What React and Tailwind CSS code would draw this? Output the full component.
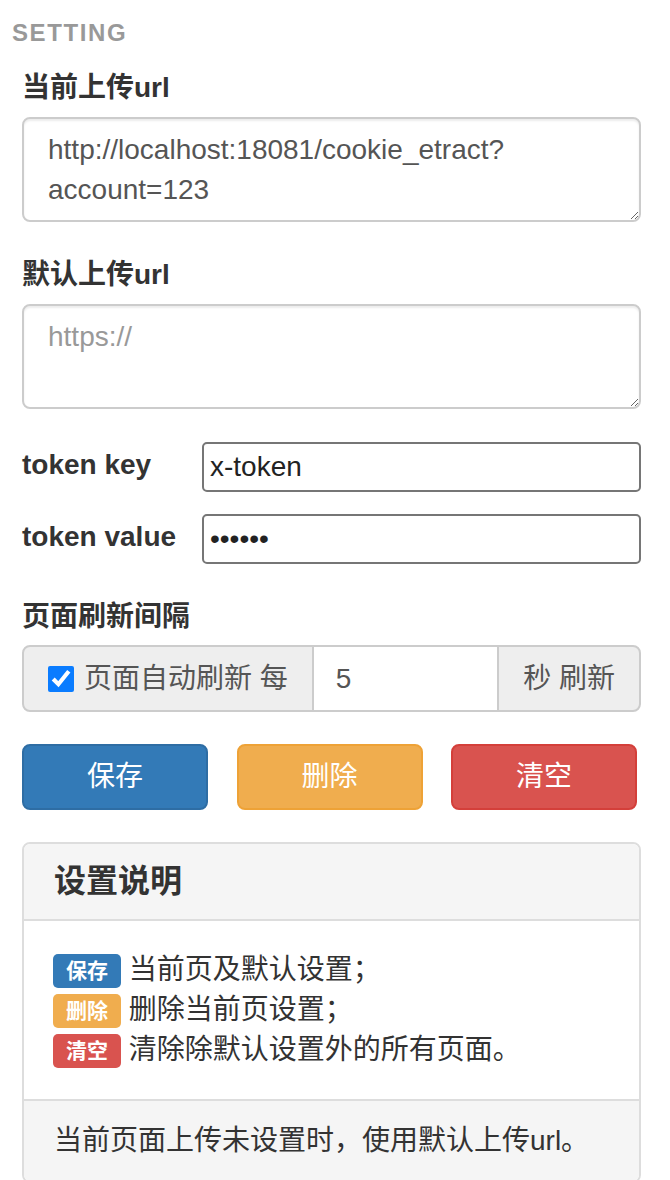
import React, { useState } from 'react';

const Badge = ({ color, children }) => (
    <span className={`inline-block ${color} text-white font-bold text-[21px] leading-none px-[13px] pt-[6px] pb-[7px] rounded-[5px] align-[1px]`}>
        {children}
    </span>
);

const App = () => {
    const [currentUrl, setCurrentUrl] = useState('http://localhost:18081/cookie_etract?account=123');
    const [defaultUrl, setDefaultUrl] = useState('');
    const [tokenKey, setTokenKey] = useState('x-token');
    const [tokenValue, setTokenValue] = useState('123456');
    const [autoRefresh, setAutoRefresh] = useState(true);
    const [interval, setInterval] = useState('5');

    return (
        <div className="min-h-screen bg-white text-[#333] font-['Liberation_Sans','Noto_Sans_CJK_SC',sans-serif]">
            <div className="pl-[12px] pt-[19px] text-[24px] leading-[28px] font-bold tracking-[1.6px] text-[#999]">
                SETTING
            </div>

            <div className="ml-[22px] w-[619px]">
                <div className="mt-[21px]">
                    <label className="block text-[28px] leading-[40px] font-bold mb-[9px]">当前上传url</label>
                    <textarea
                        rows={2}
                        value={currentUrl}
                        onChange={(e) => setCurrentUrl(e.target.value)}
                        className="block w-full h-[105px] border-2 border-[#ccc] rounded-[8px] px-[24px] py-[11px] text-[28px] leading-[40px] text-[#555] outline-none resize-y shadow-[inset_0_2px_2px_rgba(0,0,0,0.075)]"
                    />
                </div>

                <div className="mt-[33px]">
                    <label className="block text-[28px] leading-[40px] font-bold mb-[9px]">默认上传url</label>
                    <textarea
                        rows={2}
                        value={defaultUrl}
                        placeholder="https://"
                        onChange={(e) => setDefaultUrl(e.target.value)}
                        className="block w-full h-[105px] border-2 border-[#ccc] rounded-[8px] px-[24px] py-[11px] text-[28px] leading-[40px] text-[#555] placeholder:text-[#999] outline-none resize-y shadow-[inset_0_2px_2px_rgba(0,0,0,0.075)]"
                    />
                </div>

                <div className="mt-[33px] flex items-center">
                    <label className="w-[180px] text-[28px] font-bold -mt-[5px]">token key</label>
                    <input
                        type="text"
                        value={tokenKey}
                        onChange={(e) => setTokenKey(e.target.value)}
                        className="flex-1 h-[50px] border-2 border-[#767676] rounded-[5px] px-[6px] text-[28px] text-[#222] outline-none"
                    />
                </div>

                <div className="mt-[22px] flex items-center">
                    <label className="w-[180px] text-[28px] font-bold -mt-[5px]">token value</label>
                    <input
                        type="password"
                        value={tokenValue}
                        onChange={(e) => setTokenValue(e.target.value)}
                        className="flex-1 h-[50px] border-2 border-[#767676] rounded-[5px] px-[6px] text-[28px] text-[#222] outline-none"
                    />
                </div>

                <div className="mt-[33px]">
                    <label className="block text-[28px] leading-[40px] font-bold mb-[8px]">页面刷新间隔</label>
                    <div className="flex h-[67px] text-[28px] text-[#555]">
                        <span className="flex items-center bg-[#eee] border-2 border-[#ccc] rounded-l-[8px] pl-[24px] pr-[24px] whitespace-nowrap">
                            <input
                                type="checkbox"
                                checked={autoRefresh}
                                onChange={(e) => setAutoRefresh(e.target.checked)}
                                className="w-[26px] h-[26px] mr-[10px] accent-[#0a7cff]"
                            />
                            页面自动刷新 每
                        </span>
                        <input
                            type="text"
                            value={interval}
                            onChange={(e) => setInterval(e.target.value)}
                            className="flex-1 min-w-0 border-y-2 border-[#ccc] px-[22px] text-[#555] outline-none"
                        />
                        <span className="flex items-center bg-[#eee] border-2 border-[#ccc] rounded-r-[8px] px-[24px] whitespace-nowrap">
                            秒 刷新
                        </span>
                    </div>
                </div>

                <div className="mt-[32px] w-[615px] flex justify-between">
                    <button className="w-[186px] h-[66px] bg-[#337ab7] border-2 border-[#2e6da4] rounded-[8px] text-white text-[28px]">
                        保存
                    </button>
                    <button className="w-[186px] h-[66px] bg-[#f0ad4e] border-2 border-[#eea236] rounded-[8px] text-white text-[28px]">
                        删除
                    </button>
                    <button className="w-[186px] h-[66px] bg-[#d9534f] border-2 border-[#d43f3a] rounded-[8px] text-white text-[28px]">
                        清空
                    </button>
                </div>

                <div className="mt-[32px] border-2 border-[#ddd] rounded-[8px] overflow-hidden">
                    <div className="bg-[#f5f5f5] border-b-2 border-[#ddd] px-[30px] py-[20px]">
                        <h3 className="text-[32px] leading-[35px] font-semibold text-[#333]">设置说明</h3>
                    </div>
                    <div className="bg-white px-[29px] py-[29px] text-[28px] leading-[40px] text-[#333]">
                        <div><Badge color="bg-[#337ab7]">保存</Badge> 当前页及默认设置；</div>
                        <div><Badge color="bg-[#f0ad4e]">删除</Badge> 删除当前页设置；</div>
                        <div><Badge color="bg-[#d9534f]">清空</Badge> 清除除默认设置外的所有页面。</div>
                    </div>
                    <div className="bg-[#f5f5f5] border-t-2 border-[#ddd] px-[30px] py-[20px] text-[28px] leading-[40px] text-[#333]">
                        当前页面上传未设置时，使用默认上传url。
                    </div>
                </div>
            </div>
        </div>
    );
};

export default App;
